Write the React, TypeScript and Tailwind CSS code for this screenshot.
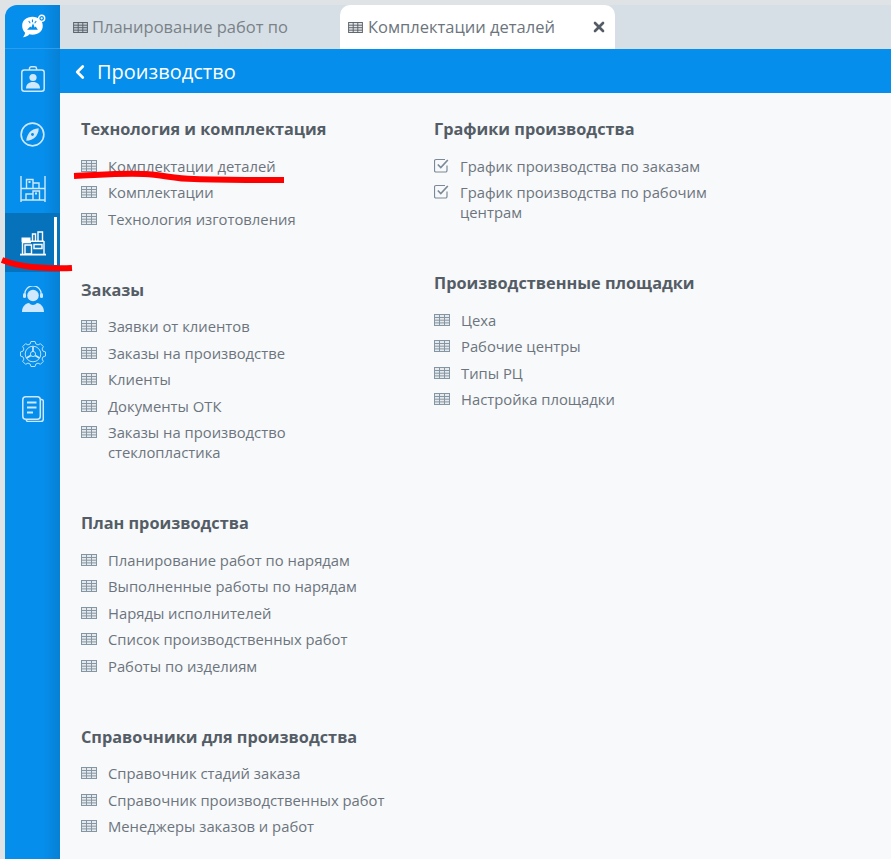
import { ChevronLeft, X } from "lucide-react";

const font = "font-['Open_Sans','Noto_Sans',sans-serif]";

function TableIcon({ className }: { className?: string }) {
  return (
    <svg viewBox="0 0 16 12" className={className} fill="none" stroke="currentColor" strokeWidth={1}>
      <rect x="0.5" y="0.5" width="15" height="11" fill="currentColor" fillOpacity={0.15} />
      <path d="M0.5 3.500h15M0.5 6.200h15M0.500 8.900h15M5.500 0.500v11M10.500 0.500v11" />
    </svg>
  );
}

function CheckIcon({ className }: { className?: string }) {
  return (
    <svg viewBox="0 0 15 15" className={className} fill="none" stroke="currentColor">
      <path d="M13 7.500v5a1.500 1.500 0 0 1-1.500 1.500h-9.500a1.500 1.500 0 0 1-1.500-1.500v-9.500a1.500 1.500 0 0 1 1.500-1.500h9" strokeWidth={1.200} />
      <path d="M3.800 6.500l3 3 7-7.500" strokeWidth={1.700} />
    </svg>
  );
}

function LogoIcon() {
  return (
    <svg viewBox="0 0 24 24" className="h-[26px] w-[26px]">
      <path d="M11.500 2.500c5.500 0 9.500 3.300 9.500 8.300s-4 8.300-9.500 8.300c-1 0-2-.1-2.900-.3-1.300 1.500-3.400 2.700-6.100 2.700 1.200-1.200 2-2.600 2.200-4.300C2.900 15.500 2 13.300 2 10.800c0-5 4-8.300 9.500-8.300z" fill="#fff" />
      <path d="M6.500 14.500h10l-2-3-1 1-1.500-4-1.500 4-1-1z" fill="#058eec" />
      <path d="M11.500 5v2.500M8 6.500l1.500 2M15 6.500l-1.500 2" stroke="#058eec" strokeWidth={1} />
      <circle cx="20" cy="4" r="2.800" fill="#058eec" stroke="#fff" strokeWidth={1.300} />
      <circle cx="20" cy="4" r="1" fill="#fff" />
    </svg>
  );
}

function BadgeIcon() {
  return (
    <svg viewBox="0 0 24 26" className="h-[26px] w-[24px]" fill="none" stroke="#cfe8fb" strokeWidth={1.500}>
      <rect x="0.800" y="4" width="22.400" height="21.200" rx="2.500" />
      <path d="M8.500 4V2.500a1.700 1.700 0 0 1 1.700-1.700h3.600a1.700 1.700 0 0 1 1.700 1.700V4" />
      <circle cx="12" cy="11.500" r="3.600" fill="#cfe8fb" stroke="none" />
      <path d="M5 22.500c0-4.300 2.800-6.500 7-6.500s7 2.200 7 6.500z" fill="#cfe8fb" stroke="none" />
    </svg>
  );
}

function CompassIcon() {
  return (
    <svg viewBox="0 0 26 26" className="h-[25px] w-[25px]" fill="none" stroke="#cfe8fb" strokeWidth={1.700}>
      <circle cx="13" cy="13" r="11.800" />
      <path d="M19.500 6.500c-.2 4.500-2 7.800-4 9.500-2 1.600-5.200 3.200-9 3.500.3-3.800 2-7 3.700-9 1.800-2 5-3.800 9.300-4z" fill="#cfe8fb" stroke="none" />
      <circle cx="13" cy="13" r="1.500" fill="#058eec" stroke="none" />
    </svg>
  );
}

function ShelfIcon() {
  return (
    <svg viewBox="0 0 26 26" className="h-[26px] w-[26px]" fill="none" stroke="#cfe8fb" strokeWidth={1.400}>
      <path d="M1 0v26M25 0v26M1 12.500h24M1 24h24" />
      <path d="M6.500 12V3.500h6.500V12M13 7h6V12" />
      <path d="M6 24V18h7v6M13 24V15h6.500v9" />
      <path d="M8.500 6h2M15 17.500h2" strokeWidth={1.800} />
    </svg>
  );
}

function FactoryIcon() {
  return (
    <svg viewBox="0 0 26 25" className="h-[25px] w-[26px]" fill="none" stroke="#fff" strokeWidth={1.400}>
      <path d="M12.500 10V3h3v7M18 10V1h4.500v9" />
      <path d="M1.500 6.500h9v4.500h-9z" fill="#fff" stroke="none" />
      <path d="M2.500 11v12M24 10v13M10 10.300h14M2 11.500h9" />
      <path d="M5 14h6.500v9H5z" />
      <path d="M14 13.500h8v4h-8z" />
      <path d="M0 23.600h26" strokeWidth={1.800} />
    </svg>
  );
}

function SupportIcon() {
  return (
    <svg viewBox="0 0 22 26" className="h-[26px] w-[22px]" fill="none" stroke="#cfe8fb" strokeWidth={1.200}>
      <circle cx="11" cy="9.500" r="5.800" fill="#cfe8fb" stroke="none" />
      <path d="M2.800 9V8a8.200 8.200 0 0 1 16.400 0v1" />
      <rect x="1" y="7" width="3" height="5" rx="1.500" fill="#cfe8fb" stroke="none" />
      <rect x="18" y="7" width="3" height="5" rx="1.500" fill="#cfe8fb" stroke="none" />
      <path d="M0 26c0-5.500 3.500-8.500 7-9 1 1.300 2.500 2 4 2s3-.7 4-2c3.500.5 7 3.500 7 9z" fill="#cfe8fb" stroke="none" />
    </svg>
  );
}

// outline of an 8-tooth cog around (13,13)
const cogPath = Array.from({ length: 8 })
  .map((_, i) => {
    const a = (i * Math.PI) / 4;
    const pt = (r: number, d: number) => `${(13 + r * Math.sin(a + d)).toFixed(2)} ${(13 - r * Math.cos(a + d)).toFixed(2)}`;
    return `${i === 0 ? "M" : "L"}${pt(10.400, -0.280)} L${pt(12.700, -0.160)} L${pt(12.700, 0.160)} L${pt(10.400, 0.280)}`;
  })
  .join(" ");

function GearIcon() {
  return (
    <svg viewBox="0 0 26 26" className="h-[26px] w-[26px]" fill="none" stroke="#cfe8fb" strokeWidth={0.900}>
      <path d={`${cogPath} Z`} />
      <circle cx="13" cy="13" r="7.800" />
      <circle cx="13" cy="13" r="2.600" />
      <path d="M13 5.500v4.900M6.500 17l4.300-2.500M19.500 17l-4.300-2.500" strokeWidth={1.700} />
    </svg>
  );
}

function DocsIcon() {
  return (
    <svg viewBox="0 0 22 26" className="h-[26px] w-[22px]" fill="none" stroke="#cfe8fb" strokeWidth={1.500}>
      <path d="M18.500 3.500h1a1.800 1.800 0 0 1 1.800 1.800V23a2.500 2.500 0 0 1-2.500 2.500H6A2 2 0 0 1 4.200 24" />
      <rect x="0.800" y="0.800" width="17.500" height="22.500" rx="3" />
      <path d="M5 6.500h9.500M5 11.500h9.500M5 16.500h6" strokeWidth={1.800} />
    </svg>
  );
}

function NavSlot({ children }: { children: React.ReactNode }) {
  return <div className="flex h-[55px] items-center justify-center">{children}</div>;
}

interface Group {
  title: string;
  icon?: "table" | "check";
  items: string[];
}

const leftGroups: Group[] = [
  { title: "Технология и комплектация", items: ["Комплектации деталей", "Комплектации", "Технология изготовления"] },
  {
    title: "Заказы",
    items: ["Заявки от клиентов", "Заказы на производстве", "Клиенты", "Документы ОТК", "Заказы на производство стеклопластика"],
  },
  {
    title: "План производства",
    items: [
      "Планирование работ по нарядам",
      "Выполненные работы по нарядам",
      "Наряды исполнителей",
      "Список производственных работ",
      "Работы по изделиям",
    ],
  },
  {
    title: "Справочники для производства",
    items: ["Справочник стадий заказа", "Справочник производственных работ", "Менеджеры заказов и работ"],
  },
];

const rightGroups: Group[] = [
  { title: "Графики производства", icon: "check", items: ["График производства по заказам", "График производства по рабочим центрам"] },
  { title: "Производственные площадки", items: ["Цеха", "Рабочие центры", "Типы РЦ", "Настройка площадки"] },
];

function MenuGroup({ group }: { group: Group }) {
  return (
    <section className="mb-[50px]">
      <h2 className="mb-[15.500px] whitespace-nowrap text-[16.300px] font-bold leading-[22px] text-[#545d66]">{group.title}</h2>
      <ul className="flex flex-col gap-[6.500px]">
        {group.items.map((item) => (
          <li key={item} className="flex items-start text-[14.800px] leading-[20px] text-[#6c757d]">
            {group.icon === "check" ? (
              <CheckIcon className="mr-[11px] mt-[2px] h-[15px] w-[15px] shrink-0 text-[#7b8a96]" />
            ) : (
              <TableIcon className="mr-[11px] mt-[4px] h-[12px] w-[16px] shrink-0 text-[#8496a3]" />
            )}
            <span className="max-w-[285px]">{item}</span>
          </li>
        ))}
      </ul>
    </section>
  );
}

export default function App() {
  return (
    <div className={`relative h-[859px] w-[891px] overflow-hidden bg-[#e0e3e5] pl-[5px] pt-[5px] ${font}`}>
      <div className="flex h-full">
        {/* Sidebar */}
        <aside className="w-[55px] shrink-0 rounded-tl-[12px] bg-gradient-to-r from-[#058eec] from-70% to-[#0780d4]">
          <div className="flex h-[44px] items-center justify-center border-b border-[#2b9dea]">
            <LogoIcon />
          </div>
          <div className="pt-[2.500px]">
            <NavSlot>
              <BadgeIcon />
            </NavSlot>
            <NavSlot>
              <CompassIcon />
            </NavSlot>
            <NavSlot>
              <ShelfIcon />
            </NavSlot>
            {/* active item */}
            <div className="relative -mb-[0.500px] -mt-[3.500px] flex h-[59px] items-center justify-center bg-[#0672bc] pt-[2px]">
              <FactoryIcon />
              <span className="absolute bottom-[7px] right-[3px] top-[4px] w-[3px] bg-white" />
            </div>
            <NavSlot>
              <SupportIcon />
            </NavSlot>
            <NavSlot>
              <GearIcon />
            </NavSlot>
            <NavSlot>
              <DocsIcon />
            </NavSlot>
          </div>
        </aside>

        <div className="flex min-w-0 flex-1 flex-col">
          {/* Tabs */}
          <div className="flex h-[44px] shrink-0 bg-[#d6dfe5]">
            <div className="flex w-[280px] items-center pl-[13px] text-[16.500px] text-[#7a8289]">
              <TableIcon className="mr-[4px] h-[11px] w-[15px] text-[#545d66]" />
              Планирование работ по
            </div>
            <div className="flex w-[275px] items-center rounded-t-[10px] bg-white pl-[8px] text-[16.500px] text-[#6c757d]">
              <TableIcon className="mr-[5px] h-[11px] w-[15px] text-[#545d66]" />
              Комплектации деталей
              <X className="ml-auto mr-[8px] h-[16px] w-[16px] text-[#545d66]" strokeWidth={4} />
            </div>
          </div>

          {/* Header */}
          <header className="flex h-[44px] shrink-0 items-center bg-[#058eec] pl-[9px] pt-[2px] text-white">
            <ChevronLeft className="mr-[6px] h-[22px] w-[22px]" strokeWidth={3} />
            <span className="text-[20px]">Производство</span>
          </header>

          {/* Content */}
          <main className="flex flex-1 bg-[#f8f9fb] pl-[21px] pt-[25px]">
            <div className="w-[353px] shrink-0">
              {leftGroups.map((g) => (
                <MenuGroup key={g.title} group={g} />
              ))}
            </div>
            <div className="w-[300px]">
              {rightGroups.map((g) => (
                <MenuGroup key={g.title} group={g} />
              ))}
            </div>
          </main>
        </div>
      </div>

      {/* Red marker strokes over the screenshot */}
      <svg className="absolute left-0 top-0 h-[859px] w-[891px]" viewBox="0 0 891 859" fill="none" stroke="#ff0000" strokeWidth={6}>
        <path d="M74 176c25-1 45-3 70-2 20 1 30 5 50 5 30 1 60 1 90 1" />
        <path d="M2 260c10 4 20 6 30 7 12 1 25 2 40 1" />
      </svg>
    </div>
  );
}
